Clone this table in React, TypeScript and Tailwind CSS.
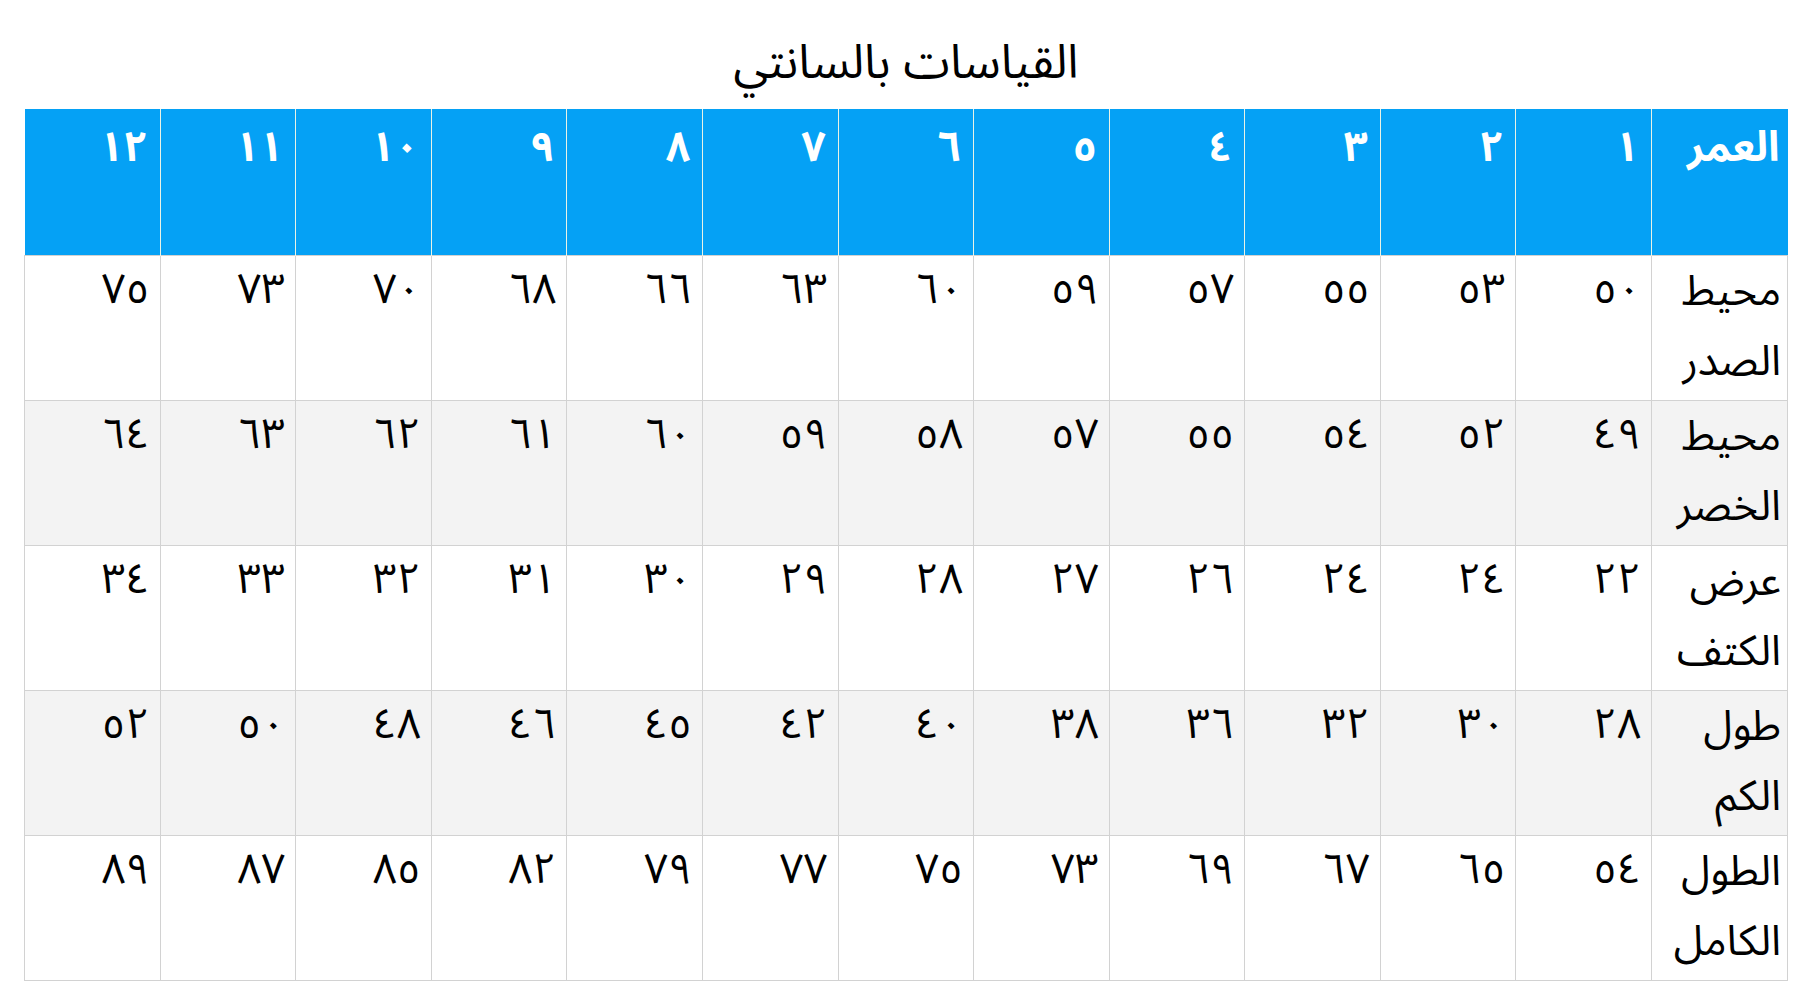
import React from "react";

const digits = "٠١٢٣٤٥٦٧٨٩";
const ar = (n: number) => String(n).replace(/\d/g, (d) => digits[Number(d)]);

const rows: { label: [string, string]; values: number[] }[] = [
  { label: ["محيط", "الصدر"], values: [50, 53, 55, 57, 59, 60, 63, 66, 68, 70, 73, 75] },
  { label: ["محيط", "الخصر"], values: [49, 52, 54, 55, 57, 58, 59, 60, 61, 62, 63, 64] },
  { label: ["عرض", "الكتف"], values: [22, 24, 24, 26, 27, 28, 29, 30, 31, 32, 33, 34] },
  { label: ["طول", "الكم"], values: [28, 30, 32, 36, 38, 40, 42, 45, 46, 48, 50, 52] },
  { label: ["الطول", "الكامل"], values: [54, 65, 67, 69, 73, 75, 77, 79, 82, 85, 87, 89] },
];

const ages = [1, 2, 3, 4, 5, 6, 7, 8, 9, 10, 11, 12];

export default function App() {
  return (
    <div
      dir="rtl"
      className="w-[1812px] h-[1000px] bg-white text-black overflow-hidden"
      style={{ fontFamily: '"Geeza Pro", Arial, "Noto Sans Arabic", "DejaVu Sans", sans-serif' }}
    >
      <h1 className="h-[109px] pt-[32px] text-center text-[47px] leading-[60px] font-normal">
        القياسات بالسانتي
      </h1>
      <div className="pr-[24px]">
        <table className="table-fixed w-[1764px] border-collapse">
          <thead>
            <tr className="h-[146px] bg-[#05a1f5] text-white">
              <th className="w-[136px] align-top text-right pr-[8px] pt-[8px] text-[42px] leading-[60px] font-bold border-l border-[#e9f3e6]">
                العمر
              </th>
              {ages.map((a, i) => (
                <th
                  key={a}
                  className={`align-top text-right pr-[12px] pt-[8px] text-[42px] leading-[60px] font-bold ${
                    i < ages.length - 1 ? "border-l border-[#e9f3e6]" : ""
                  }`}
                >
                  {ar(a)}
                </th>
              ))}
            </tr>
          </thead>
          <tbody>
            {rows.map((r, ri) => (
              <tr key={ri} className={`h-[145px] ${ri % 2 === 1 ? "bg-[#f3f3f3]" : "bg-white"}`}>
                <td className="align-top text-right pr-[6px] pt-0 text-[42px] leading-[70px] whitespace-nowrap border border-[#d2d2d2]">
                  {r.label[0]}
                  <br />
                  {r.label[1]}
                </td>
                {r.values.map((v, vi) => (
                  <td
                    key={vi}
                    className="align-top text-right pr-[10px] pt-[3px] text-[42px] leading-[60px] border border-[#d2d2d2]"
                  >
                    {ar(v)}
                  </td>
                ))}
              </tr>
            ))}
          </tbody>
        </table>
      </div>
    </div>
  );
}
